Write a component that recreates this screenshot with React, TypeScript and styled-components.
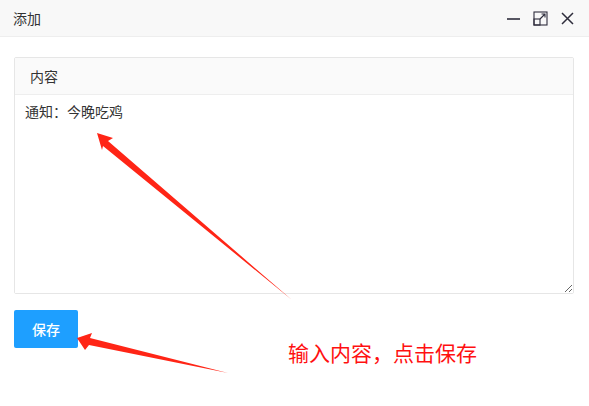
import styled, { createGlobalStyle } from "styled-components";

const GlobalStyle = createGlobalStyle`
  html, body {
    margin: 0;
    padding: 0;
    background: #fff;
  }
  body {
    font-family: "Noto Sans CJK SC", "Noto Sans", "Liberation Sans", sans-serif;
    color: #333;
  }
`;

const Wrap = styled.div`
  position: relative;
  width: 589px;
  height: 406px;
  background: #fff;
  overflow: hidden;
`;

const TitleBar = styled.div`
  height: 36px;
  border-bottom: 1px solid #eee;
  background: #f8f8f8;
  display: flex;
  align-items: center;
  justify-content: space-between;
  padding: 0 14px 0 13px;
`;

const Title = styled.span`
  font-size: 14px;
  color: #333;
`;

const Tools = styled.div`
  display: flex;
  align-items: center;
  gap: 12px;
`;

const ToolBtn = styled.span`
  width: 15px;
  height: 15px;
  display: flex;
  align-items: center;
  justify-content: center;
  color: #2e2d3c;
`;

const Body = styled.div`
  padding: 20px 15px 0 14px;
`;

const Panel = styled.div`
  border: 1px solid #e6e6e6;
  border-radius: 2px;
`;

const PanelHeader = styled.div`
  height: 36px;
  line-height: 36px;
  padding-left: 15px;
  background: #fafafa;
  border-bottom: 1px solid #eee;
  font-size: 14px;
  color: #333;
`;

const TextArea = styled.textarea`
  display: block;
  width: 100%;
  height: 198px;
  box-sizing: border-box;
  border: none;
  outline: none;
  padding: 6px 10px;
  font-family: inherit;
  font-size: 14px;
  line-height: 20px;
  color: #333;
  background: #fff;
`;

const Footer = styled.div`
  display: flex;
  align-items: flex-start;
  margin-top: 16px;
`;

const SaveButton = styled.button`
  width: 64px;
  height: 38px;
  border: none;
  border-radius: 2px;
  background: #1e9fff;
  color: #fff;
  font-family: inherit;
  font-size: 14px;
  font-weight: 500;
  padding: 0;
  cursor: pointer;
`;

const Hint = styled.span`
  margin: 30px 0 0 210px;
  font-size: 21px;
  line-height: 24px;
  color: #ff1010;
  white-space: nowrap;
`;

const Annotations = styled.svg`
  position: absolute;
  left: 0;
  top: 0;
  pointer-events: none;
`;

function App() {
  return (
    <>
      <GlobalStyle />
      <Wrap>
        <TitleBar>
          <Title>添加</Title>
          <Tools>
            <ToolBtn>
              <svg width="15" height="15" viewBox="0 0 15 15">
                <path d="M1 8h13" stroke="currentColor" strokeWidth="1.6" />
              </svg>
            </ToolBtn>
            <ToolBtn>
              <svg width="15" height="15" viewBox="0 0 15 15" fill="none" stroke="currentColor" strokeWidth="1.1">
                <rect x="1" y="1" width="13" height="13" />
                <rect x="1" y="8" width="6" height="6" />
                <path d="M7 8L12 3M8.5 3H12V6.5" />
              </svg>
            </ToolBtn>
            <ToolBtn>
              <svg width="15" height="15" viewBox="0 0 15 15">
                <path d="M2 2L13 13M13 2L2 13" stroke="currentColor" strokeWidth="1.5" />
              </svg>
            </ToolBtn>
          </Tools>
        </TitleBar>
        <Body>
          <Panel>
            <PanelHeader>内容</PanelHeader>
            <TextArea defaultValue="通知：今晚吃鸡" />
          </Panel>
          <Footer>
            <SaveButton>保存</SaveButton>
            <Hint>输入内容，点击保存</Hint>
          </Footer>
        </Body>
        <Annotations width="589" height="406" viewBox="0 0 589 406">
          <polygon
            fill="#ff2516"
            points="97,133 113,138 108,141 292,300 103,146 102,150"
          />
          <polygon
            fill="#ff2516"
            points="77,338 92,333 90,338 228,373 89,345 85,350"
          />
        </Annotations>
      </Wrap>
    </>
  );
}

export default App;
